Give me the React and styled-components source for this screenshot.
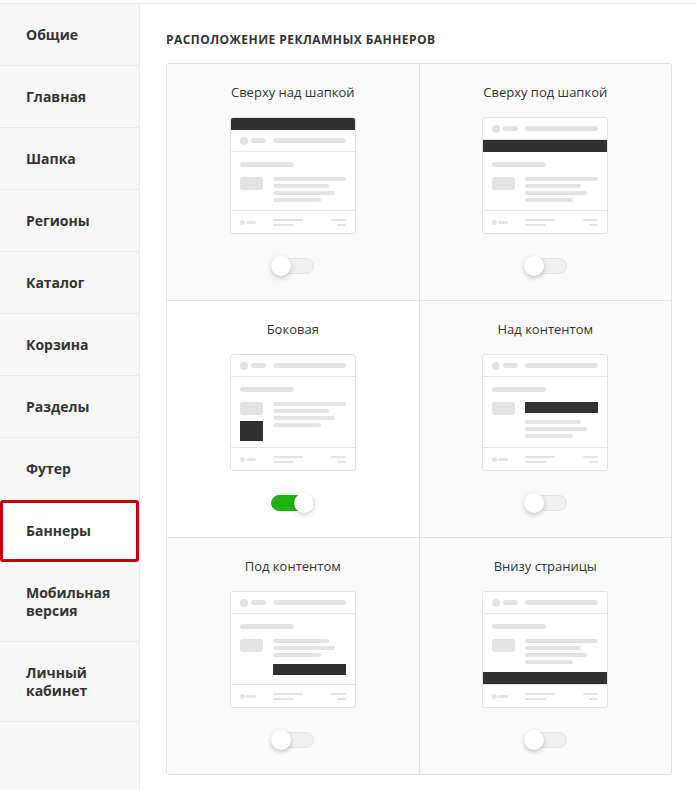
import React from 'react';
import styled, { createGlobalStyle } from 'styled-components';

const GlobalStyle = createGlobalStyle`
	html, body {
		margin: 0;
		padding: 0;
		background: #fff;
		font-family: 'Open Sans', 'Noto Sans', sans-serif;
		color: #333;
	}
	#root {
		min-height: 100vh;
		display: flex;
		flex-direction: column;
	}
`;

const Layout = styled.div`
	flex: 1;
	display: flex;
	margin-top: 3px;
	border-top: 1px solid #ebebeb;
`;

const Sidebar = styled.nav`
	width: 139px;
	flex-shrink: 0;
	background: #f7f7f7;
	border-right: 1px solid #ececec;
`;

const NavItem = styled.div`
	position: relative;
	padding: 21.5px 20px 21.5px 26px;
	font-size: 14px;
	line-height: 18px;
	font-weight: 700;
	color: #333;
	border-bottom: 1px solid #e9e9e9;
	background: ${(props) => (props.$active ? '#fff' : 'transparent')};
	cursor: pointer;
	&::after {
		content: '';
		display: ${(props) => (props.$active ? 'block' : 'none')};
		position: absolute;
		top: 0;
		left: 0;
		right: 0;
		bottom: -1px;
		border: 3px solid #c1000e;
		border-radius: 3px;
	}
`;

const Main = styled.main`
	flex: 1;
	padding: 28px 25px 16px 26px;
`;

const Heading = styled.h2`
	margin: 0 0 15px;
	font-size: 12px;
	line-height: 16px;
	font-weight: 700;
	letter-spacing: 0.45px;
	text-transform: uppercase;
	color: #333;
`;

const Grid = styled.div`
	display: grid;
	grid-template-columns: 1fr 1fr;
	gap: 1px;
	background: #e2e2e2;
	border: 1px solid #e2e2e2;
	border-radius: 3px;
	overflow: hidden;
`;

const Cell = styled.div`
	display: flex;
	flex-direction: column;
	align-items: center;
	padding: 19px 0 26px;
	background: ${(props) => (props.$active ? '#fff' : '#fafafa')};
`;

const CellTitle = styled.div`
	font-size: 13px;
	line-height: 18px;
	color: #333;
	margin-bottom: 16px;
`;

/* mini page preview */
const Card = styled.div`
	width: 126px;
	height: 117px;
	box-sizing: border-box;
	display: flex;
	flex-direction: column;
	background: #fff;
	border: 1px solid #e3e3e3;
	border-radius: 3px;
	overflow: hidden;
`;

const Banner = styled.div`
	height: 12px;
	flex-shrink: 0;
	background: #303030;
`;

const Header = styled.div`
	height: 22px;
	box-sizing: border-box;
	flex-shrink: 0;
	display: flex;
	align-items: center;
	justify-content: space-between;
	padding: 0 9px;
	border-bottom: 1px solid #e6e6e6;
`;

const Group = styled.div`
	display: flex;
	align-items: center;
	gap: ${(props) => props.$gap || 3}px;
`;

const Dot = styled.span`
	display: block;
	width: ${(props) => props.$size}px;
	height: ${(props) => props.$size}px;
	border-radius: 50%;
	background: #e3e3e3;
`;

const Bar = styled.span`
	display: block;
	width: ${(props) => props.$w}px;
	height: ${(props) => props.$h || 4}px;
	border-radius: 3px;
	background: #e3e3e3;
`;

const Body = styled.div`
	flex: 1;
	padding: 10px 9px 0;
`;

const Row = styled.div`
	display: flex;
	gap: 10px;
	margin-top: 10px;
`;

const Side = styled.div`
	display: flex;
	flex-direction: column;
	gap: 6px;
`;

const Thumb = styled.span`
	display: block;
	width: 23px;
	height: 13px;
	border-radius: 3px;
	background: #e3e3e3;
`;

const SideBanner = styled.span`
	display: block;
	width: 23px;
	height: 20px;
	background: #303030;
`;

const Lines = styled.div`
	display: flex;
	flex-direction: column;
	gap: 3px;
`;

const InlineBanner = styled.span`
	display: block;
	width: 73px;
	height: 11px;
	background: #303030;
	margin: ${(props) => (props.$last ? '4px 0 0' : '0 0 4px')};
`;

const Footer = styled.div`
	height: 23px;
	box-sizing: border-box;
	flex-shrink: 0;
	display: grid;
	grid-template-columns: 23px 1fr auto;
	align-items: center;
	column-gap: 10px;
	padding: 0 9px;
	border-top: 1px solid #e6e6e6;
`;

const Stack = styled.div`
	display: flex;
	flex-direction: column;
	align-items: ${(props) => (props.$right ? 'flex-end' : 'flex-start')};
	gap: 3px;
`;

/* switch */
const Track = styled.span`
	position: relative;
	display: block;
	width: 43px;
	height: 16px;
	box-sizing: border-box;
	margin-top: 24px;
	border-radius: 8px;
	background: ${(props) => (props.$on ? '#20b20e' : '#f0f0f0')};
	border: 1px solid ${(props) => (props.$on ? '#20b20e' : '#e2e2e2')};
	cursor: pointer;
`;

const Knob = styled.span`
	position: absolute;
	top: -3px;
	left: ${(props) => (props.$on ? '22px' : '-1px')};
	width: 20px;
	height: 20px;
	border-radius: 50%;
	background: #fff;
	box-shadow: 0 2px 5px rgba(0, 0, 0, 0.22);
`;

const nav = [
	'Общие',
	'Главная',
	'Шапка',
	'Регионы',
	'Каталог',
	'Корзина',
	'Разделы',
	'Футер',
	'Баннеры',
	['Мобильная', 'версия'],
	['Личный', 'кабинет'],
];

const places = [
	{ id: 'top', title: 'Сверху над шапкой' },
	{ id: 'header', title: 'Сверху под шапкой' },
	{ id: 'side', title: 'Боковая', on: true },
	{ id: 'content-top', title: 'Над контентом' },
	{ id: 'content-bottom', title: 'Под контентом' },
	{ id: 'bottom', title: 'Внизу страницы' },
];

function Preview({ place }) {
	const inline = place === 'content-top' || place === 'content-bottom';
	const lines = inline ? [56, 62, 48] : [73, 56, 62, 48];

	return (
		<Card>
			{place === 'top' && <Banner />}
			<Header>
				<Group>
					<Dot $size={8} />
					<Bar $w={15} $h={5} />
				</Group>
				<Bar $w={73} $h={5} />
			</Header>
			{place === 'header' && <Banner />}
			<Body>
				<Bar $w={54} $h={5} />
				<Row>
					<Side>
						<Thumb />
						{place === 'side' && <SideBanner />}
					</Side>
					<Lines>
						{place === 'content-top' && <InlineBanner />}
						{lines.map((w, i) => (
							<Bar key={i} $w={w} />
						))}
						{place === 'content-bottom' && <InlineBanner $last />}
					</Lines>
				</Row>
			</Body>
			{place === 'bottom' && <Banner />}
			<Footer>
				<Group $gap={1}>
					<Dot $size={5} />
					<Bar $w={10} $h={3} />
				</Group>
				<Stack>
					<Bar $w={30} $h={2} />
					<Bar $w={21} $h={2} />
				</Stack>
				<Stack $right>
					<Bar $w={15} $h={2} />
					<Bar $w={9} $h={2} />
				</Stack>
			</Footer>
		</Card>
	);
}

export default function App() {
	return (
		<>
			<GlobalStyle />
			<Layout>
				<Sidebar>
					{nav.map((item, i) => (
						<NavItem key={i} $active={item === 'Баннеры'}>
							{Array.isArray(item) ? (
								<>
									{item[0]}
									<br />
									{item[1]}
								</>
							) : (
								item
							)}
						</NavItem>
					))}
				</Sidebar>
				<Main>
					<Heading>Расположение рекламных баннеров</Heading>
					<Grid>
						{places.map((p) => (
							<Cell key={p.id} $active={p.on}>
								<CellTitle>{p.title}</CellTitle>
								<Preview place={p.id} />
								<Track $on={p.on}>
									<Knob $on={p.on} />
								</Track>
							</Cell>
						))}
					</Grid>
				</Main>
			</Layout>
		</>
	);
}
